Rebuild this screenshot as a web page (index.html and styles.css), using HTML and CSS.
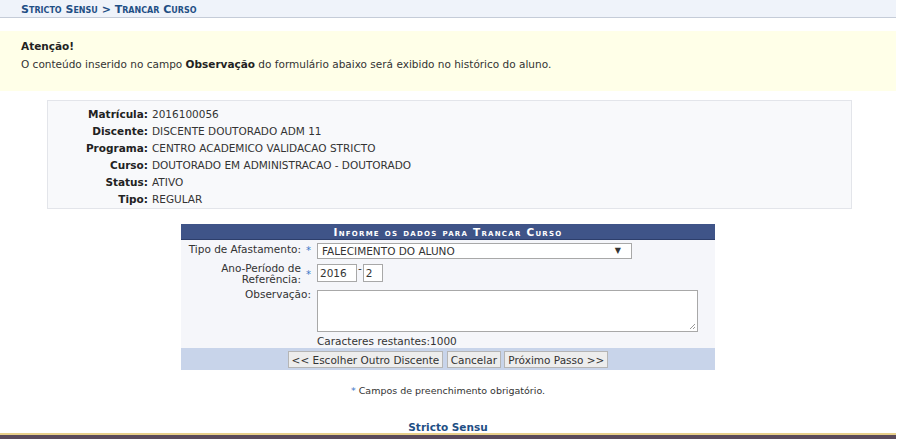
FILE: index.html
```html
<!DOCTYPE html>
<html lang="pt-BR">
<head>
<meta charset="UTF-8">
<title>Trancar Curso</title>
<link rel="stylesheet" href="styles.css">
</head>
<body>
<div class="page">
  <h2 class="titulo">Stricto Sensu &gt; Trancar Curso</h2>

  <div class="aviso">
    <b>Atenção!</b>
    <p>O conteúdo inserido no campo <b>Observação</b> do formulário abaixo será exibido no histórico do aluno.</p>
  </div>

  <table class="visualizacao">
    <tr><th>Matrícula:</th><td>2016100056</td></tr>
    <tr><th>Discente:</th><td>DISCENTE DOUTORADO ADM 11</td></tr>
    <tr><th>Programa:</th><td>CENTRO ACADEMICO VALIDACAO STRICTO</td></tr>
    <tr><th>Curso:</th><td>DOUTORADO EM ADMINISTRACAO - DOUTORADO</td></tr>
    <tr><th>Status:</th><td>ATIVO</td></tr>
    <tr><th>Tipo:</th><td>REGULAR</td></tr>
  </table>

  <table class="formulario">
    <caption>Informe os dados para Trancar Curso</caption>
    <tr>
      <th class="obrigatorio">Tipo de Afastamento:</th>
      <td>
        <div class="select">FALECIMENTO DO ALUNO <span class="seta">&#9660;</span></div>
      </td>
    </tr>
    <tr>
      <th class="obrigatorio dupla">Ano-Período de Referência:</th>
      <td><span class="campo ano">2016</span>-<span class="campo periodo">2</span></td>
    </tr>
    <tr>
      <th>Observação:</th>
      <td>
        <div class="textarea">
          <svg class="grip" width="7" height="7" viewBox="0 0 7 7"><path d="M6 1L1 6M6 4L4 6" stroke="#999" stroke-width="1"/></svg>
        </div>
        <div class="restantes">Caracteres restantes:1000</div>
      </td>
    </tr>
    <tfoot>
      <tr>
        <td colspan="2">
          <button>&lt;&lt; Escolher Outro Discente</button>
          <button>Cancelar</button>
          <button>Próximo Passo &gt;&gt;</button>
        </td>
      </tr>
    </tfoot>
  </table>

  <p class="legenda"><span class="estrela">*</span> Campos de preenchimento obrigatório.</p>

  <div class="rodape">Stricto Sensu</div>
  <div class="faixa"></div>
</div>
</body>
</html>
```

FILE: styles.css
```css
body {
  margin: 0;
  background-color: #fff;
  font-family: "DejaVu Sans", Verdana, sans-serif;
  font-size: 10.5px;
  color: #333;
}

.page {
  width: 896px;
}

.titulo {
  margin: 0;
  height: 18px;
  padding: 3px 0 0 21px;
  box-sizing: border-box;
  background-color: #eff3fa;
  border-bottom: 1px solid #c5ccd8;
  font-size: 11px;
  font-variant: small-caps;
  font-weight: bold;
  color: #1f4f85;
}

.aviso {
  margin-top: 13px;
  height: 60px;
  box-sizing: border-box;
  padding: 9px 21px;
  background-color: #ffffe8;
}

.aviso b {
  color: #222;
}

.aviso p {
  margin: 6px 0 0;
}

.visualizacao {
  width: 805px;
  margin: 9px 0 0 47px;
  border: 1px solid #e3e5ea;
  background-color: #f8f9fb;
  border-collapse: separate;
  border-spacing: 0;
  padding: 5px 0 0;
}

.visualizacao th {
  width: 100px;
  text-align: right;
  font-weight: bold;
  color: #222;
  padding: 1px 4px 2px 0;
  line-height: 14px;
}

.visualizacao td {
  padding: 1px 0 2px;
  line-height: 14px;
}

.formulario {
  width: 534px;
  margin: 15px 0 0 181px;
  border-collapse: collapse;
  background-color: #f5f6fa;
}

.formulario caption {
  height: 15px;
  line-height: 16px;
  background-color: #3f5488;
  color: #fff;
  font-weight: bold;
  font-variant: small-caps;
  letter-spacing: 1.25px;
  font-size: 10.5px;
  border-bottom: 1px solid #2d3e6b;
}

.formulario th {
  width: 120px;
  text-align: right;
  font-weight: normal;
  vertical-align: top;
  padding: 4px 2px 0 0;
  line-height: 11px;
}

.formulario th.obrigatorio {
  padding-right: 12px;
  position: relative;
}

.formulario th.obrigatorio::after {
  content: "*";
  position: absolute;
  right: 2px;
  top: 5px;
  color: #3b77c6;
  font-size: 10px;
}

.formulario th.dupla::after {
  top: 10px;
}

.formulario td {
  padding: 3px 0 0 4px;
  vertical-align: top;
}

.select {
  width: 305px;
  height: 14px;
  padding: 0 4px;
  border: 1px solid #a8a8a8;
  background-color: #fff;
  line-height: 14px;
  position: relative;
}

.seta {
  position: absolute;
  right: 10px;
  top: 0;
  font-size: 8px;
}

.campo {
  display: inline-block;
  height: 16px;
  line-height: 16px;
  border: 1px solid #a8a8a8;
  background-color: #fff;
  padding: 0 2px;
  margin-top: 2px;
  vertical-align: top;
}

.ano {
  width: 34px;
  margin-right: 1px;
}

.periodo {
  width: 14px;
  margin-left: 1px;
}

.textarea {
  width: 379px;
  height: 40px;
  margin-top: 2px;
  border: 1px solid #a8a8a8;
  background-color: #fff;
  position: relative;
}

.grip {
  position: absolute;
  right: 1px;
  bottom: 1px;
}

.restantes {
  padding: 3px 0 1px;
}

.formulario tfoot td {
  background-color: #c8d4ea;
  text-align: center;
  padding: 3px 0 2px;
}

button {
  font-family: "DejaVu Sans", Verdana, sans-serif;
  font-size: 10.5px;
  color: #333;
  height: 17px;
  padding: 0 3px;
  background-color: #ededed;
  border: 1px solid #b5b5b5;
  margin: 0;
}

.legenda {
  text-align: center;
  margin: 15px 0 0;
  font-size: 9.5px;
}

.estrela {
  color: #3b77c6;
}

.rodape {
  margin-top: 25px;
  line-height: 12px;
  text-align: center;
  font-weight: bold;
  color: #1f4f85;
}

.faixa {
  height: 5px;
  margin-top: 0;
  border-top: 2px solid #e8cf8a;
  background-color: #5a4a5a;
}
```
